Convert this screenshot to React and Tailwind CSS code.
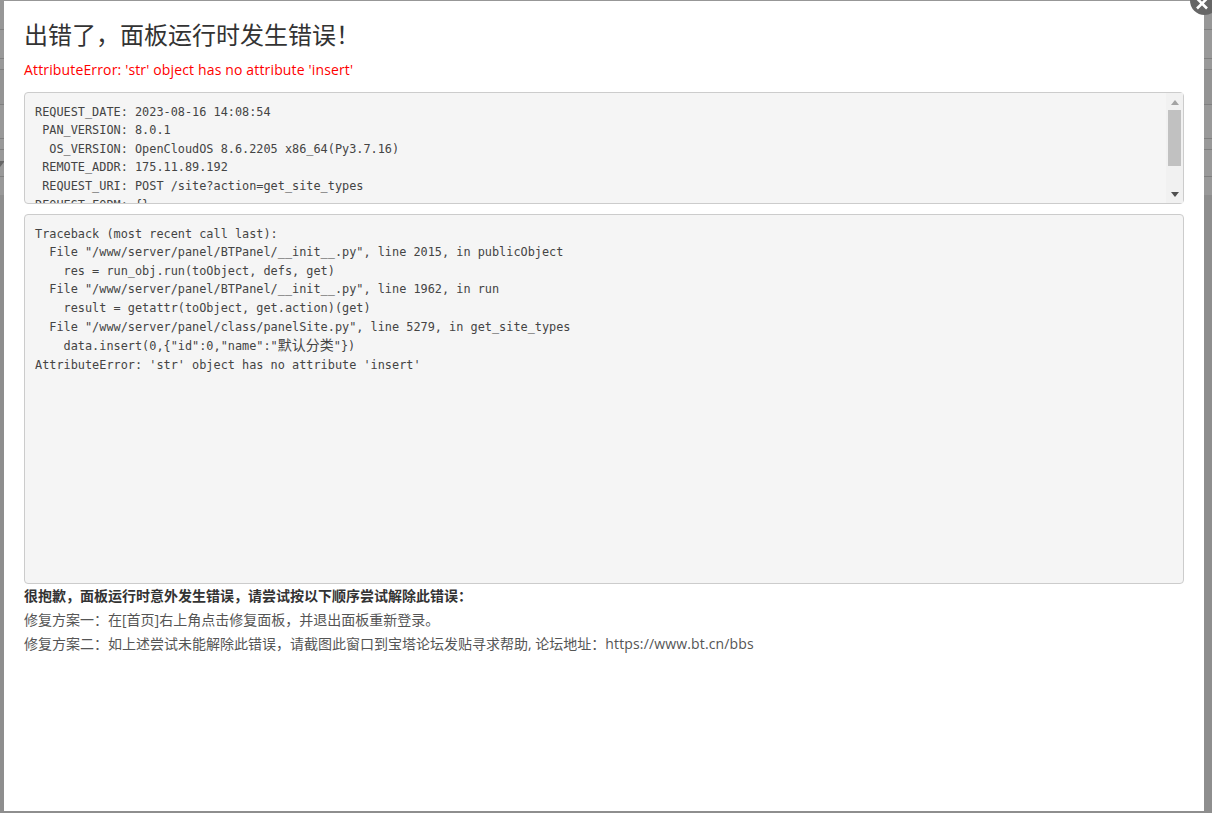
const mono = "font-['DejaVu_Sans_Mono','Noto_Sans_CJK_SC',monospace]";

const backdropRows = [
  "h-[30px] bg-[#979797]",
  "h-[29px] bg-[#999999]",
  "h-[11px] bg-[#999999]",
  "h-[35px] bg-[#949494]",
  "h-[34px] bg-[#999999]",
  "h-[11px] bg-[#999999]",
  "h-[27px] bg-[#999999]",
];

function Backdrop() {
  return (
    <div className="relative h-full flex flex-col bg-[#8e8e8e]">
      {backdropRows.map((c, i) => (
        <div key={i} className={`${c} border-b border-[#808080]`} />
      ))}
      <div className="h-[18px] bg-[#999999]" />
      <svg width="4" height="6" viewBox="0 0 4 6" className="absolute left-0 top-[161px]">
        <path d="M0 0H4V1L0 6Z" fill="#666666" />
      </svg>
    </div>
  );
}

function Pre({ className, children }) {
  return (
    <pre
      className={`${mono} ${className} text-[11.87px] leading-[18.65px] text-[#444444] bg-[#f5f5f5] border border-[#cccccc] rounded-[4px] px-[10px] py-[9.5px] overflow-hidden whitespace-pre`}
    >
      {children}
    </pre>
  );
}

const info = `REQUEST_DATE: 2023-08-16 14:08:54
 PAN_VERSION: 8.0.1
  OS_VERSION: OpenCloudOS 8.6.2205 x86_64(Py3.7.16)
 REMOTE_ADDR: 175.11.89.192
 REQUEST_URI: POST /site?action=get_site_types
REQUEST_FORM: {}
  USER_AGENT: Mozilla/5.0`;

function Scrollbar() {
  return (
    <div className="absolute right-[1px] top-[1px] bottom-[1px] w-[17px] bg-[#f1f1f1] flex flex-col items-center">
      <svg width="8" height="5" viewBox="0 0 8 5" className="mt-[7px] shrink-0">
        <path d="M4 0 8 5H0Z" fill="#a3a3a3" />
      </svg>
      <div className="mt-[5px] w-[13px] h-[56px] bg-[#c1c1c1] shrink-0" />
      <div className="flex-1" />
      <svg width="8" height="5" viewBox="0 0 8 5" className="mb-[6px] shrink-0">
        <path d="M0 0H8L4 5Z" fill="#505050" />
      </svg>
    </div>
  );
}

export default function App() {
  return (
    <div className="relative w-full h-[813px] overflow-hidden">
      <Backdrop />
      <div className="absolute left-[4px] top-[1px] w-[1200px] h-[810px] bg-white px-[20px] text-[#333333] font-['Open_Sans','Noto_Sans_CJK_SC',sans-serif]">
        <h1 className="mt-[20px] text-[24px] leading-[28px] font-normal">出错了，面板运行时发生错误！</h1>
        <p className="mt-[11px] text-[14px] leading-[20px] text-[#ff0000] tracking-[0.15px]">
          AttributeError: 'str' object has no attribute 'insert'
        </p>
        <div className="relative mt-[12px]">
          <Pre className="h-[112px]">{info}</Pre>
          <Scrollbar />
        </div>
        <Pre className="mt-[10px] h-[370px]">
          {`Traceback (most recent call last):
  File "/www/server/panel/BTPanel/__init__.py", line 2015, in publicObject
    res = run_obj.run(toObject, defs, get)
  File "/www/server/panel/BTPanel/__init__.py", line 1962, in run
    result = getattr(toObject, get.action)(get)
  File "/www/server/panel/class/panelSite.py", line 5279, in get_site_types
    data.insert(0,{"id":0,"name":"`}
          <span className="text-[14px]">默认分类</span>
          {`"})
AttributeError: 'str' object has no attribute 'insert'`}
        </Pre>
        <div className="text-[14px] leading-[24px] text-[#555555]">
          <p className="font-bold text-[#333333]">很抱歉，面板运行时意外发生错误，请尝试按以下顺序尝试解除此错误：</p>
          <p>修复方案一：在[首页]右上角点击修复面板，并退出面板重新登录。</p>
          <p>
            修复方案二：如上述尝试未能解除此错误，请截图此窗口到宝塔论坛发贴寻求帮助, 论坛地址：
            <span className="tracking-[0.15px]">https://www.bt.cn/bbs</span>
          </p>
        </div>
      </div>
      <button className="absolute left-[1190px] top-[-14px] w-[29px] h-[29px] rounded-full bg-[#666666] flex items-center justify-center">
        <svg width="29" height="29" viewBox="0 0 29 29">
          <path d="M9 10 19 20M19 10 9 20" stroke="#ffffff" strokeWidth="2.6" fill="none" transform="translate(-2 2.5)" />
        </svg>
      </button>
    </div>
  );
}
